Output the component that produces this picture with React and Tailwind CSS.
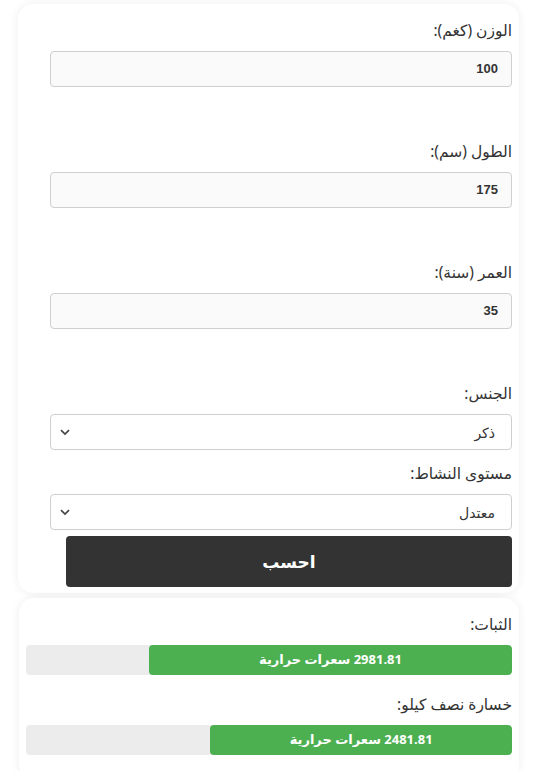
const FIELDS = [
  { label: 'الوزن (كغم):', value: '100' },
  { label: 'الطول (سم):', value: '175' },
  { label: 'العمر (سنة):', value: '35' },
]

const RESULTS = [
  { label: 'الثبات:', value: '2981.81', pct: 74.7 },
  { label: 'خسارة نصف كيلو:', value: '2481.81', pct: 62.1 },
]

function Chevron() {
  return (
    <svg
      aria-hidden="true"
      viewBox="0 0 12 12"
      className="pointer-events-none absolute top-1/2 left-[9px] h-[12px] w-[12px] -translate-y-1/2 text-[#444]"
    >
      <path d="M2 4.2l4 3.8 4-3.8" fill="none" stroke="currentColor" strokeWidth="1.7" />
    </svg>
  )
}

function SelectBox({ label, value, className }) {
  return (
    <div className={className}>
      <label className="block h-5 text-[15.5px] leading-5 text-[#333]">{label}</label>
      <div className="relative mt-[11px]">
        <div className="flex h-9 items-center rounded-[4px] border border-[#cfcfcf] bg-white pr-[16px] text-[14px] text-[#333]">
          {value}
        </div>
        <Chevron />
      </div>
    </div>
  )
}

export default function App() {
  return (
    <div
      className="min-h-[771px] bg-white pt-1"
      style={{ fontFamily: '"Noto Sans", "DejaVu Sans", sans-serif' }}
    >
      <div
        dir="rtl"
        className="ml-[18px] w-[501px] rounded-[15px] bg-white pt-4 pr-[7px] pb-[6px] pl-8 shadow-[0_0_10px_rgba(0,0,0,0.07)]"
      >
        {FIELDS.map((f) => (
          <div key={f.label} className="mb-[54px]">
            <label className="block h-5 text-[15.5px] leading-5 text-[#333]">{f.label}</label>
            <div
              className="mt-[11px] flex h-9 items-center rounded-[4px] border border-[#cfcfcf] bg-[#fafafa] pr-[13px] text-[13px] font-bold text-[#333]"
              style={{ fontFamily: '"Liberation Sans", Arial, sans-serif' }}
            >
              {f.value}
            </div>
          </div>
        ))}
        <SelectBox label="الجنس:" value="ذكر" />
        <SelectBox label="مستوى النشاط:" value="معتدل" className="mt-[13px]" />
        <button className="mt-[6px] mr-0 ml-4 flex h-[51px] w-[446px] items-center justify-center rounded-[4px] bg-[#333] text-[17px] font-bold text-white">
          احسب
        </button>
      </div>

      <div
        dir="rtl"
        className="mt-[5px] ml-[19px] w-[500px] rounded-[15px] bg-white px-[7px] pt-4 pb-6 shadow-[0_0_10px_rgba(0,0,0,0.07)]"
      >
        {RESULTS.map((r, i) => (
          <div key={r.label} className={i > 0 ? 'mt-[19px]' : ''}>
            <label className="block h-5 text-[15.5px] leading-5 text-[#333]">{r.label}</label>
            <div className="mt-[11px] flex h-[30px] overflow-hidden rounded-[4px] bg-[#ececec]">
              <div
                className="flex h-full items-center justify-center rounded-[4px] bg-[#4caf50] text-[13px] font-bold text-white"
                style={{ width: `${r.pct}%` }}
              >
                {r.value} سعرات حرارية
              </div>
            </div>
          </div>
        ))}
      </div>
    </div>
  )
}
